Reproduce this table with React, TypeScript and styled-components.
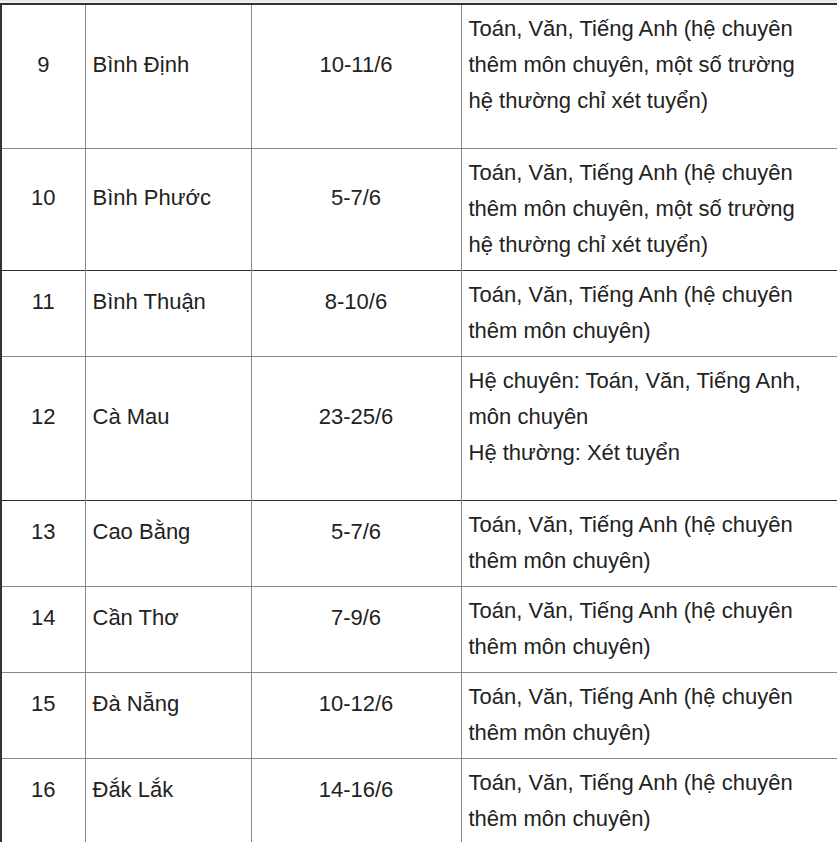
import React from "react";
import styled, { createGlobalStyle } from "styled-components";

const GlobalStyle = createGlobalStyle`
  html, body {
    margin: 0;
    padding: 0;
    background: #fff;
    overflow: hidden;
  }
`;

const Page = styled.div`
  width: 837px;
  height: 842px;
  overflow: hidden;
  font-family: "Liberation Sans", Arial, sans-serif;
  color: #222;
`;

const TopShade = styled.div`
  height: 3px;
  background: linear-gradient(#e4e4e4, #f6f6f6);
`;

const Table = styled.table`
  border-collapse: collapse;
  table-layout: fixed;
  width: 880px;
  border-top: 2px solid #333;
  border-left: 2px solid #333;
  font-size: 22px;
  line-height: 36px;
`;

const Row = styled.tr<{ $heavy?: boolean }>`
  border-top: 1px solid ${(p) => (p.$heavy ? "#2e2e2e" : "#888")};
`;

const Cell = styled.td<{ $align?: "left" | "center"; $wide?: boolean }>`
  border-left: 1px solid #888;
  border-right: 1px solid #888;
  padding: ${(p) => (p.$wide ? "6px 60px 7px 7px" : "6px 7px 7px")};
  text-align: ${(p) => p.$align || "left"};
  vertical-align: middle;
`;

const Text = styled.p<{ $tail?: boolean }>`
  margin: 0 0 ${(p) => (p.$tail ? "22px" : "0")};
`;

type Entry = {
  no: number;
  province: string;
  date: string;
  subjects: string[];
  tail?: boolean;
  heavy?: boolean;
};

const full =
  "Toán, Văn, Tiếng Anh (hệ chuyên thêm môn chuyên, một số trường hệ thường chỉ xét tuyển)";
const short = "Toán, Văn, Tiếng Anh (hệ chuyên thêm môn chuyên)";

const rows: Entry[] = [
  { no: 9, province: "Bình Định", date: "10-11/6", subjects: [full], tail: true },
  { no: 10, province: "Bình Phước", date: "5-7/6", subjects: [full] },
  { no: 11, province: "Bình Thuận", date: "8-10/6", subjects: [short], heavy: true },
  {
    no: 12,
    province: "Cà Mau",
    date: "23-25/6",
    subjects: ["Hệ chuyên: Toán, Văn, Tiếng Anh, môn chuyên", "Hệ thường: Xét tuyển"],
    tail: true,
  },
  { no: 13, province: "Cao Bằng", date: "5-7/6", subjects: [short], heavy: true },
  { no: 14, province: "Cần Thơ", date: "7-9/6", subjects: [short] },
  { no: 15, province: "Đà Nẵng", date: "10-12/6", subjects: [short] },
  { no: 16, province: "Đắk Lắk", date: "14-16/6", subjects: [short] },
];

const App: React.FC = () => {
  return (
    <>
      <GlobalStyle />
      <Page>
        <TopShade />
        <Table>
          <colgroup>
            <col style={{ width: 84 }} />
            <col style={{ width: 166 }} />
            <col style={{ width: 210 }} />
            <col style={{ width: 420 }} />
          </colgroup>
          <tbody>
            {rows.map((r) => (
              <Row key={r.no} $heavy={r.heavy}>
                <Cell $align="center">
                  <Text $tail>{r.no}</Text>
                </Cell>
                <Cell>
                  <Text $tail>{r.province}</Text>
                </Cell>
                <Cell $align="center">
                  <Text $tail>{r.date}</Text>
                </Cell>
                <Cell $wide>
                  {r.subjects.map((s, i) => (
                    <Text key={i} $tail={r.tail && i === r.subjects.length - 1}>
                      {s}
                    </Text>
                  ))}
                </Cell>
              </Row>
            ))}
          </tbody>
        </Table>
      </Page>
    </>
  );
};

export default App;
